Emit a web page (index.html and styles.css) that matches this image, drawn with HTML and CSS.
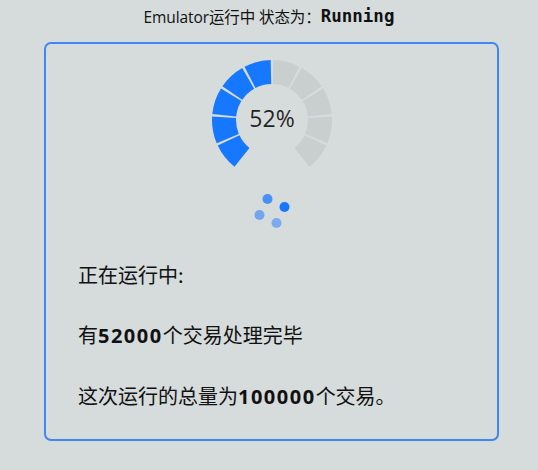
FILE: index.html
```html
<!DOCTYPE html>
<html lang="zh">
<head>
<meta charset="utf-8">
<title>Emulator</title>
<link rel="stylesheet" href="styles.css">
</head>
<body>
<div class="header">
  <span class="header-label">Emulator运行中 状态为：</span><span class="header-status">Running</span>
</div>
<div class="card">
  <div class="gauge">
    <svg width="120" height="120" viewBox="0 0 120 120">
      <g fill="none" stroke-width="24" stroke-dasharray="21.8 301.59">
        <circle class="seg-on" cx="60" cy="60" r="48" transform="rotate(-231.27 60 60)"/>
        <circle class="seg-on" cx="60" cy="60" r="48" transform="rotate(-202.77 60 60)"/>
        <circle class="seg-on" cx="60" cy="60" r="48" transform="rotate(-174.27 60 60)"/>
        <circle class="seg-on" cx="60" cy="60" r="48" transform="rotate(-145.77 60 60)"/>
        <circle class="seg-on" cx="60" cy="60" r="48" transform="rotate(-117.27 60 60)"/>
        <circle class="seg-off" cx="60" cy="60" r="48" transform="rotate(-88.77 60 60)"/>
        <circle class="seg-off" cx="60" cy="60" r="48" transform="rotate(-60.27 60 60)"/>
        <circle class="seg-off" cx="60" cy="60" r="48" transform="rotate(-31.77 60 60)"/>
        <circle class="seg-off" cx="60" cy="60" r="48" transform="rotate(-3.27 60 60)"/>
        <circle class="seg-off" cx="60" cy="60" r="48" transform="rotate(25.23 60 60)"/>
      </g>
      <text class="gauge-text" x="60" y="61" text-anchor="middle" dominant-baseline="middle">52%</text>
    </svg>
  </div>
  <div class="spinner">
    <svg width="40" height="40" viewBox="0 0 40 40">
      <circle class="dot dot-a" cx="15.5" cy="8" r="5"/>
      <circle class="dot dot-b" cx="32.5" cy="16" r="5"/>
      <circle class="dot dot-c" cx="7.5" cy="24" r="5"/>
      <circle class="dot dot-d" cx="24.5" cy="32" r="5"/>
    </svg>
  </div>
  <p class="line">正在运行中:</p>
  <p class="line">有<b class="num">52000</b>个交易处理完毕</p>
  <p class="line">这次运行的总量为<b class="num">100000</b>个交易。</p>
</div>
</body>
</html>
```
FILE: styles.css
```css
html, body {
  margin: 0;
  padding: 0;
  background: #d6dbdb;
}
body {
  width: 538px;
  height: 470px;
  font-family: "Open Sans", "Noto Sans CJK SC", sans-serif;
  color: #111;
}
.header {
  height: 32px;
  display: flex;
  align-items: center;
  justify-content: center;
}
.header-label {
  font-size: 15.5px;
  letter-spacing: -0.1px;
  color: #111;
}
.header-status {
  font-family: "DejaVu Sans Mono", "Liberation Mono", monospace;
  font-weight: bold;
  font-size: 17.5px;
  color: #111;
}
.card {
  box-sizing: border-box;
  margin: 10px 0 0 44px;
  width: 455px;
  height: 399px;
  border: 2px solid #3f86f7;
  border-radius: 7px;
  padding: 16px 0 0 32px;
}
.gauge {
  display: flex;
  justify-content: center;
  margin-left: -31px;
  height: 120px;
}
.seg-on { stroke: #1677ff; }
.seg-off { stroke: #c9cece; }
.gauge-text {
  font-family: "Open Sans", sans-serif;
  font-size: 23px;
  fill: rgba(0, 0, 0, 0.85);
}
.spinner {
  display: flex;
  justify-content: center;
  margin: 11px 0 0 -32px;
  height: 40px;
}
.dot { fill: #1677ff; }
.dot-a { opacity: 0.75; }
.dot-b { opacity: 1; }
.dot-c { opacity: 0.52; }
.dot-d { opacity: 0.48; }
.line {
  margin: 29px 0 0 0;
  font-size: 20px;
  line-height: 30px;
  font-family: "Noto Sans CJK SC", sans-serif;
}
.line + .line { margin-top: 30px; }
.num {
  font-family: "Open Sans", sans-serif;
  font-weight: bold;
  letter-spacing: 1.5px;
}
```
